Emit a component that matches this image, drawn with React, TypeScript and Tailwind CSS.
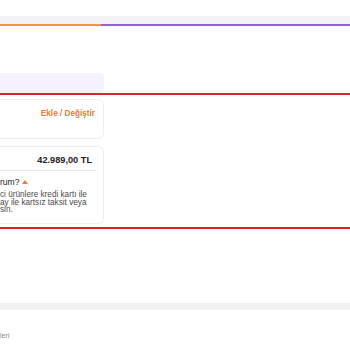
import React from "react";

export default function App() {
  return (
    <div className="w-[350px] h-[350px] bg-white overflow-hidden font-['Liberation_Sans',Arial,sans-serif]">
      <div className="h-[16px]" />
      <div className="h-[8px] bg-[#f3f3f5]" />
      <div className="flex h-[1.5px]">
        <div className="w-[101px] bg-[#f2924e]" />
        <div className="flex-1 bg-[#9160d4]" />
      </div>
      <div className="h-[47.5px]" />
      <div className="w-[104px] h-[20px] bg-[#f6f2fd] rounded-r-[5px]" />
      <div className="h-[2px] bg-[#e21f2c]" />
      <div className="h-[4px]" />
      <div className="w-[104px] h-[40px] border border-l-0 border-[#eceef1] rounded-r-[6px] flex justify-end pt-[9px] pr-[8px]">
        <span className="text-[8.2px] leading-[10px] font-bold text-[#f47a2e]">Ekle / Değiştir</span>
      </div>
      <div className="h-[7px]" />
      <div className="w-[104px] h-[78px] border border-l-0 border-[#eceef1] rounded-r-[6px] pr-[7px]">
        <div className="flex justify-end pt-[8px] pr-[4px] h-[24px] border-b border-[#e8e8ea]">
          <span className="text-[9.2px] leading-[11px] font-bold text-[#222]">42.989,00 TL</span>
        </div>
        <div className="pt-[6px] flex items-center gap-[3px]">
          <span className="text-[8.5px] leading-[10px] text-[#222]">rum?</span>
          <svg width="6" height="4" viewBox="0 0 6 4" className="mt-[-1px]">
            <path d="M0 4 L3 0 L6 4 Z" fill="#f47a2e" />
          </svg>
        </div>
        <div className="pt-[4px] text-[8.2px] leading-[7.6px] text-[#4a4a4a] whitespace-nowrap">
          <div>ci ürünlere kredi kartı ile</div>
          <div>ay ile kartsız taksit veya</div>
          <div>sin.</div>
        </div>
      </div>
      <div className="h-[3px]" />
      <div className="h-[2px] bg-[#e21f2c]" />
      <div className="h-[74px]" />
      <div className="h-[7px] bg-[#f2f2f3]" />
      <div className="pt-[22px] text-[7px] leading-[8px] text-[#8a8a8a]">leri</div>
    </div>
  );
}
